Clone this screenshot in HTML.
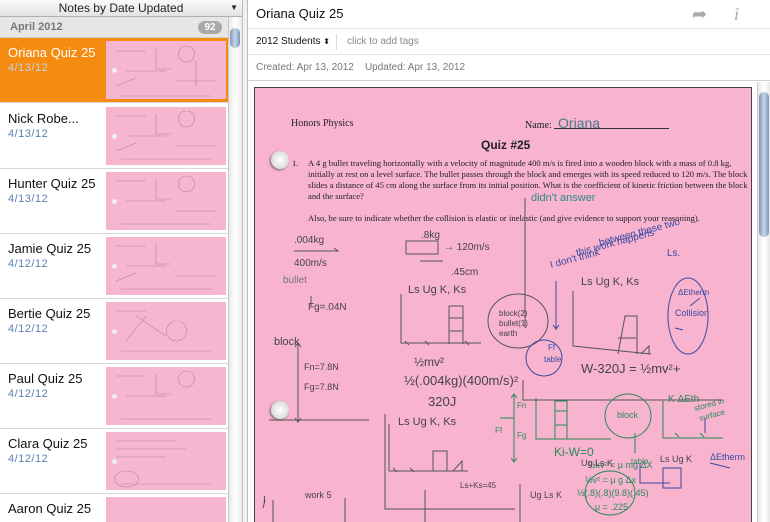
<!DOCTYPE html><html><head><style>
*{margin:0;padding:0;box-sizing:border-box}
html,body{width:770px;height:522px;overflow:hidden}
body{background:#fff;font-family:"Liberation Sans",sans-serif;position:relative}
.abs{position:absolute}
.hdr{left:0;top:0;width:242px;height:17px;background:linear-gradient(#fafafa,#e4e4e4);border-bottom:1px solid #b0b0b0;font-size:12px;text-align:center;line-height:16px;color:#222}
.grp{left:0;top:17px;width:228px;height:21px;background:#e6e6e6;border-bottom:1px solid #cfcfcf;font-size:11px;font-weight:bold;color:#777;line-height:21px;padding-left:10px}
.badge{right:6px;top:4px;width:24px;height:13px;border-radius:7px;background:#a9a9a9;color:#fff;font-size:10px;line-height:13px;text-align:center}
.row{left:0;width:228px;height:65px;border-bottom:1px solid #d8d8d8;background:#fff;overflow:hidden}
.row .t{position:absolute;left:8px;top:7px;font-size:13px;color:#111}
.row .d{position:absolute;left:8px;top:24px;font-size:11px;color:#5a7fb5;letter-spacing:.5px}
.row .th{position:absolute;left:106px;top:3px;width:120px;height:58px;background:#f7b6d0}
.row .th:after{content:"";position:absolute;left:6px;top:27px;width:5px;height:5px;border-radius:50%;background:#eee}
.sel{background:#f68b12}
.sel .t{color:#fff}.sel .d{color:#c3d3e6}
.sb{left:228px;top:17px;width:14px;height:505px;background:linear-gradient(90deg,#e9e9e9,#fff,#e9e9e9);border-left:1px solid #c8c8c8}
.thumbL{left:230px;top:28px;width:10px;height:20px;border-radius:5px;background:linear-gradient(90deg,#7d94b8,#c8d6ea,#7d94b8)}
.div{left:242px;top:0;width:6px;height:522px;background:#f0f0f0;border-left:1px solid #bdbdbd;border-right:1px solid #bdbdbd}
.rp{left:248px;top:0;width:522px}
.ln{border-bottom:1px solid #e2e2e2}
</style></head><body>
<div class="abs hdr">Notes by Date Updated<span style="position:absolute;right:4px;top:0;font-size:8px">▼</span></div>
<div class="abs grp">April 2012<div class="abs badge">92</div></div>
<div class="abs row sel" style="top:38px"><div class="t">Oriana Quiz 25</div><div class="d">4/13/12</div><div class="th"></div></div>
<div class="abs row" style="top:104px"><div class="t">Nick Robe...</div><div class="d">4/13/12</div><div class="th"></div></div>
<div class="abs row" style="top:169px"><div class="t">Hunter Quiz 25</div><div class="d">4/13/12</div><div class="th"></div></div>
<div class="abs row" style="top:234px"><div class="t">Jamie Quiz 25</div><div class="d">4/12/12</div><div class="th"></div></div>
<div class="abs row" style="top:299px"><div class="t">Bertie Quiz 25</div><div class="d">4/12/12</div><div class="th"></div></div>
<div class="abs row" style="top:364px"><div class="t">Paul Quiz 25</div><div class="d">4/12/12</div><div class="th"></div></div>
<div class="abs row" style="top:429px"><div class="t">Clara Quiz 25</div><div class="d">4/12/12</div><div class="th"></div></div>
<div class="abs row" style="top:494px;height:28px;border-bottom:none"><div class="t">Aaron Quiz 25</div><div class="th" style="height:25px"></div></div>
<svg class="abs" style="left:106px;top:41px" width="120" height="480">
<g stroke="#9a7a8a" stroke-width=".6" fill="none" opacity=".8">
<path d="M10 10h30M50 8v20h15M80 5a8 8 0 1 0 1 0M20 30h40M10 45l20-8M70 40h40M90 20v25M15 55h90"/>
<path d="M10 75h30M50 73v20h15M80 70a8 8 0 1 0 1 0M20 95h40M10 110l20-8M70 105h40M15 118h90"/>
<path d="M10 140h30M50 138v20h15M80 135a8 8 0 1 0 1 0M20 160h40M70 170h40M15 183h90"/>
<path d="M10 205h30M50 203v20h15M20 225h40M10 240l20-8M70 235h40M15 248h90"/>
<path d="M10 270h30M30 275l30 20M40 275l-20 25M70 280a10 10 0 1 0 1 0M15 310h90"/>
<path d="M10 335h30M50 333v20h15M80 330a8 8 0 1 0 1 0M20 355h40M15 378h90"/>
<path d="M10 400h60M10 408h70M10 416h50M20 430a12 8 0 1 0 1 0M15 443h90"/>
</g></svg>
<div class="abs sb"></div><div class="abs thumbL"></div>
<div class="abs div"></div>
<div class="abs rp ln" style="top:0;height:29px;font-size:13px;line-height:28px;padding-left:8px;color:#111">Oriana Quiz 25
<span style="position:absolute;left:444px;top:0;color:#aaa;font-size:18px">➦</span>
<span style="position:absolute;left:486px;top:0;color:#aaa;font-size:18px;font-style:italic;font-family:'Liberation Serif',serif">i</span></div>
<div class="abs rp ln" style="top:29px;height:26px;font-size:10px;line-height:26px;padding-left:8px;color:#111">2012 Students <span style="font-size:8px">⬍</span>
<span style="position:absolute;left:88px;top:5px;height:16px;border-left:1px solid #ddd"></span>
<span style="position:absolute;left:99px;color:#888">click to add tags</span></div>
<div class="abs rp" style="top:55px;height:26px;font-size:10px;line-height:26px;padding-left:8px;color:#777;border-bottom:1px solid #cfcfcf">Created: Apr 13, 2012 &nbsp;&nbsp; Updated: Apr 13, 2012</div>
<div class="abs" style="left:248px;top:82px;width:509px;height:440px;background:#fff"></div>
<div class="abs" style="left:757px;top:82px;width:13px;height:440px;background:linear-gradient(90deg,#e9e9e9,#fff,#e9e9e9);border-left:1px solid #ccc"></div>
<div class="abs" style="left:759px;top:92px;width:10px;height:145px;border-radius:5px;background:linear-gradient(90deg,#7d94b8,#c8d6ea,#7d94b8)"></div>
<div class="abs" style="left:254px;top:87px;width:498px;height:435px;background:#f8b3cf;border:1px solid #444;border-bottom:none;font-family:'Liberation Serif',serif;color:#222;overflow:hidden">
<div class="abs" style="left:36px;top:30px;font-size:10px">Honors Physics</div>
<div class="abs" style="left:270px;top:30px;font-size:10px">Name: <span style="display:inline-block;width:115px;border-bottom:1px solid #333;font-family:'Liberation Sans';color:#4a7a8a;font-size:14px;line-height:10px">&nbsp;Oriana</span></div>
<div class="abs" style="left:226px;top:50px;font-size:12px;font-weight:bold;font-family:'Liberation Sans'">Quiz #25</div>
<div class="abs" style="left:16px;top:63px;width:18px;height:18px;border-radius:50%;background:radial-gradient(#fff,#ccc);box-shadow:-1px 1px 2px #666"></div>
<div class="abs" style="left:16px;top:313px;width:18px;height:18px;border-radius:50%;background:radial-gradient(#fff,#ccc);box-shadow:-1px 1px 2px #666"></div>
<div class="abs" style="left:37px;top:70px;font-size:8.6px">1.</div>
<div class="abs" style="left:53px;top:70px;width:440px;font-size:8.6px;line-height:11px">A 4 g bullet traveling horizontally with a velocity of magnitude 400 m/s is fired into a wooden block with a mass of 0.8 kg, initially at rest on a level surface. The bullet passes through the block and emerges with its speed reduced to 120 m/s. The block slides a distance of 45 cm along the surface from its initial position. What is the coefficient of kinetic friction between the block and the surface?</div>
<div class="abs" style="left:276px;top:104px;font-size:11px;color:#2a8a8a;font-family:'Liberation Sans'">didn't answer</div>
<div class="abs" style="left:53px;top:125px;font-size:8.6px">Also, be sure to indicate whether the collision is elastic or inelastic (and give evidence to support your reasoning).</div>
<svg class="abs" style="left:0;top:0" width="498" height="435">
<g fill="none" stroke="#555" stroke-width="1">
<path d="M39 163h44l-4-3M39 163"/>
<rect x="151" y="153" width="32" height="13"/>
<path d="M165 173h23M146 206v49h80M194 218h14v38M194 218v38M194 230h14M194 243h14M150 253l4 4M170 253l4 4M210 253l4 4"/>
<ellipse cx="263" cy="233" rx="30" ry="27"/>
<path d="M318 203v55l78 8M363 266l7-38h12v38M363 250h18M386 266l8-8v8"/>
<path d="M43 256v77M40 259l3-4 3 4M40 330l3 4 3-4M56 208v10"/>
<path d="M134 336v47h79M178 383v-20h14v20M198 383l9-10v10M138 380l4 4M155 380l4 4"/>
<path d="M130 326v95h130M268 292v20h200M270 110v130"/>
<path d="M8 420l2-8M18 412v23M90 410v25M170 402v33M265 396v39M14 332h100"/>
</g>
<g fill="none" stroke="#3a4aa0" stroke-width="1">
<path d="M301 193v48l-3-4M301 241l3-4"/>
<circle cx="289" cy="270" r="18"/>
<ellipse cx="433" cy="228" rx="20" ry="38"/>
<path d="M420 240l8 2M435 218l10-8"/>
<path d="M450 330v15M455 375l20 5"/>
<path d="M385 375v20h30M408 380h18v20h-18z"/>
</g>
<g fill="none" stroke="#2a8a5a" stroke-width="1">
<path d="M259 306v67M256 310l3-4 3 4M256 370l3 4 3-4M245 330h14M281 310v41h75M300 351v-38h12v38M300 323h12M300 337h12"/>
<ellipse cx="373" cy="328" rx="23" ry="22"/>
<path d="M380 345v20M408 313v37h60M420 345l4 4M445 345l4 4"/>
<ellipse cx="355" cy="405" rx="25" ry="22"/>
</g>
<g font-family="Liberation Sans" font-size="10" fill="#444">
<text x="39" y="155">.004kg</text><text x="166" y="150">.8kg</text><text x="189" y="162">→ 120m/s</text><text x="39" y="178">400m/s</text><text x="196" y="187">.45cm</text>
<text x="28" y="195" fill="#777">bullet</text><text x="53" y="222">Fg=.04N</text>
<text x="19" y="257" font-size="11">block</text><text x="49" y="282" font-size="9">Fn=7.8N</text><text x="49" y="302" font-size="9">Fg=7.8N</text>
<text x="153" y="205" font-size="11">Ls  Ug  K,  Ks</text><text x="326" y="197" font-size="11">Ls  Ug   K,  Ks</text>
<text x="244" y="228" font-size="8">block(2)</text><text x="244" y="238" font-size="8">bullet(1)</text><text x="244" y="248" font-size="8">earth</text>
<text x="159" y="278" font-size="12">½mv²</text><text x="149" y="297" font-size="13">½(.004kg)(400m/s)²</text><text x="173" y="318" font-size="13">320J</text>
<text x="326" y="285" font-size="13">W-320J = ½mv²+</text>
<text x="143" y="337" font-size="11">Ls  Ug  K,  Ks</text>
<text x="8" y="415">I</text><text x="50" y="410" font-size="9">work 5</text><text x="205" y="400" font-size="8">Ls+Ks=45</text><text x="275" y="410" font-size="9">Ug Ls K</text>
<g fill="#3a4aa0"><text x="296" y="180" font-size="10" transform="rotate(-15 296 180)">I don't think</text><text x="322" y="168" font-size="10" transform="rotate(-15 322 168)">this work happens</text><text x="345" y="158" font-size="10" transform="rotate(-15 345 158)">between these two</text><text x="412" y="168" font-size="10">Ls.</text>
<text x="289" y="274" font-size="8">table</text><text x="293" y="262" font-size="8">Ff</text>
<text x="423" y="207" font-size="8">ΔEtherm</text><text x="420" y="228" font-size="9">Collision</text><text x="455" y="372" font-size="9">ΔEtherm</text></g>
<g fill="#2a8a5a"><text x="262" y="320" font-size="8">Fn</text><text x="240" y="345" font-size="8">Ff</text><text x="262" y="350" font-size="8">Fg</text>
<text x="299" y="368" font-size="12">Ki-W=0</text><text x="362" y="330" font-size="9">block</text><text x="376" y="376" font-size="8">table</text>
<text x="413" y="314" font-size="10">K  ΔEth</text><text x="440" y="323" font-size="8" transform="rotate(-15 440 323)">stored in</text><text x="445" y="333" font-size="8" transform="rotate(-15 445 333)">surface</text>
<text x="333" y="380" font-size="9">½kv² = μ mg ΔX</text><text x="330" y="395" font-size="9">½v² = μ g Δx</text><text x="322" y="408" font-size="9">½(.8)(.8)(9.8)(.45)</text><text x="340" y="422" font-size="9">μ = .225</text></g>
<text x="326" y="378" font-size="9">Ug  Ls  K</text><text x="405" y="374" font-size="9">Ls   Ug    K</text>
</g></svg>
</div>
</body></html>
